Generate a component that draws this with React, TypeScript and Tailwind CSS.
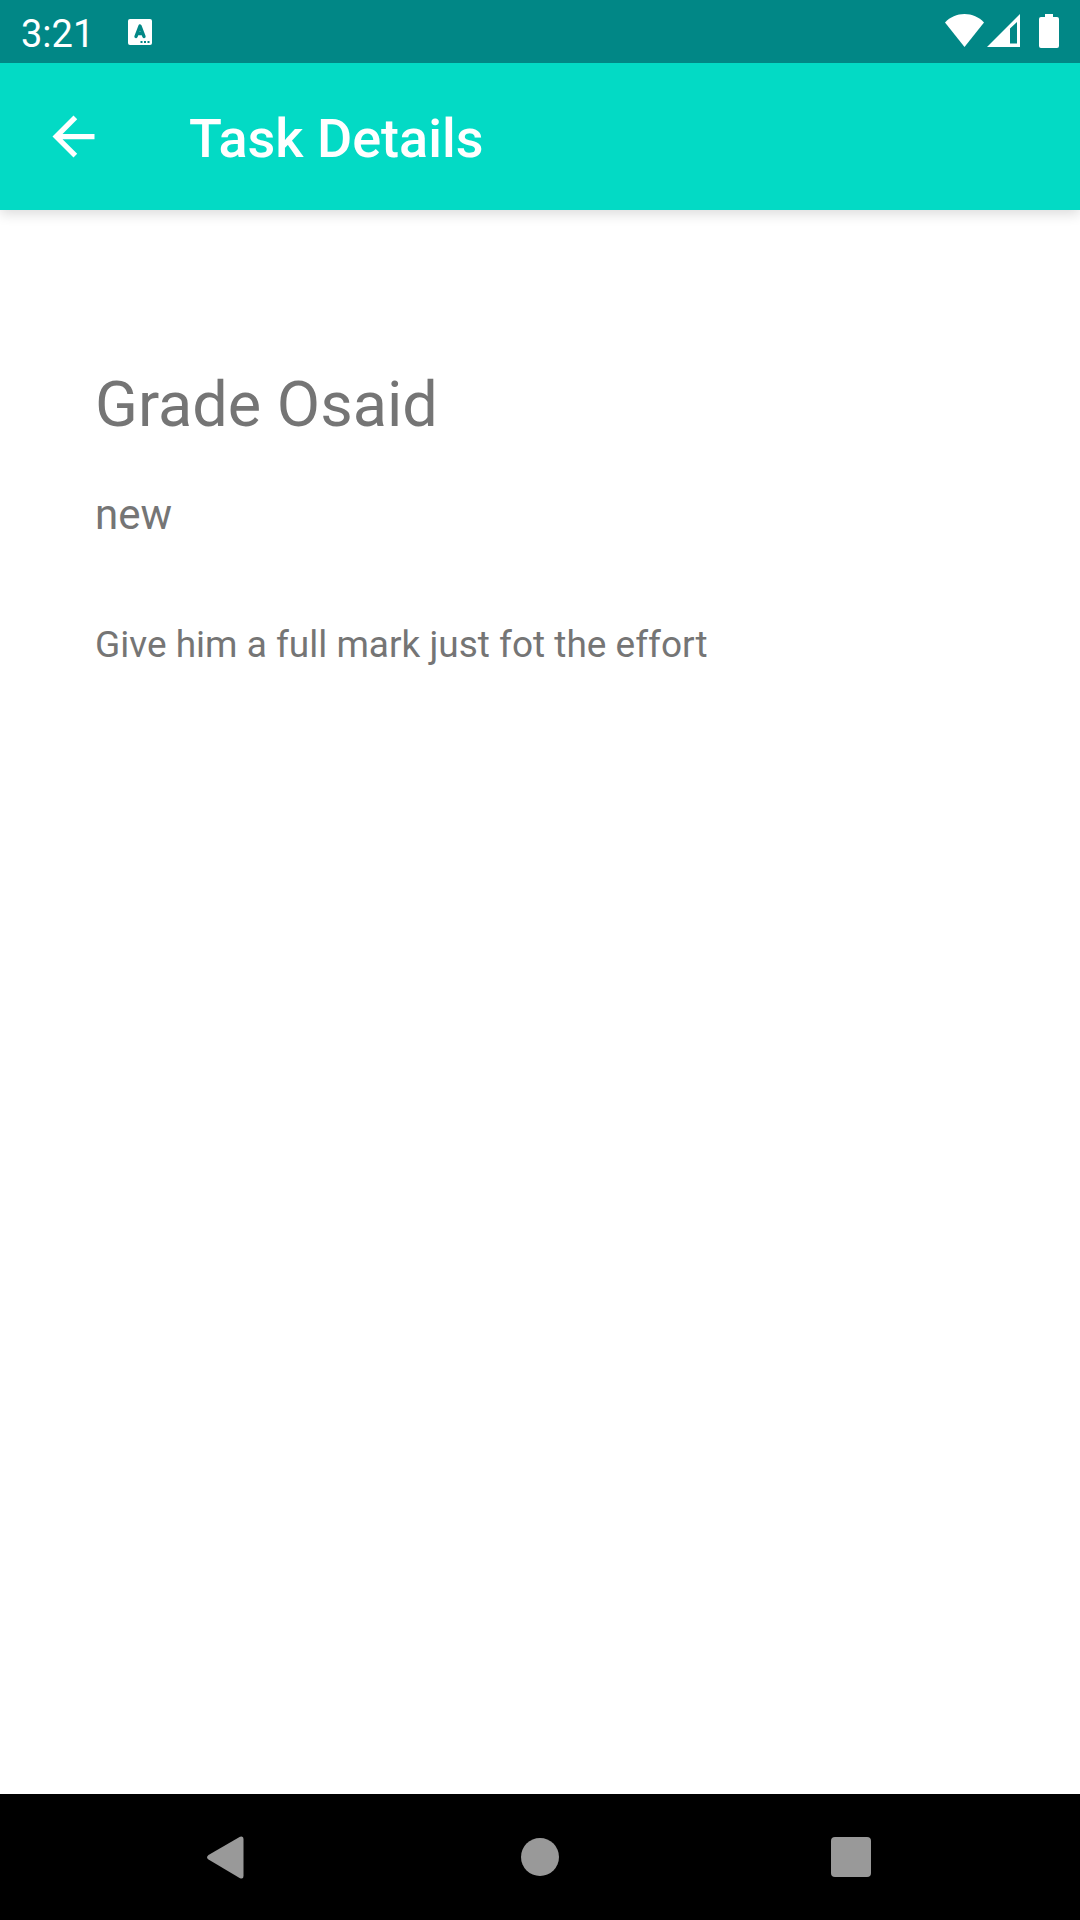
import React from 'react';

function StatusBar() {
  return (
    <div className="relative z-10 flex h-[63px] items-center justify-between bg-[#018786] px-[21px] text-white">
      <div className="flex items-center gap-[34px]">
        <time className="pt-1 text-[38px] leading-[44px]">3:21</time>
        <svg className="h-[28px] w-6" viewBox="0 0 24 28" aria-label="Keyboard input" role="img">
          <rect y="1" width="24" height="26" rx="2" fill="#fff" />
          <path d="M8 18.500L12 8L16 18.500M9.500 15.500H14.500" fill="none" stroke="#018786" strokeWidth="3.400" strokeLinecap="round" strokeLinejoin="round" />
          <path d="M12.500 23h2v2h-2zM16 23h2v2h-2zM19.500 23h2v2h-2z" fill="#018786" />
        </svg>
      </div>
      <div className="flex items-center pb-0.5">
        <svg className="h-[34px] w-[39px]" viewBox="0 0 39 34" fill="#fff" aria-label="Wi-Fi" role="img">
          <path d="M0 8.500C5 3 12 0 19.500 0S34 3 39 8.500L19.500 33Z" />
        </svg>
        <svg className="ml-[3px] h-[34px] w-[33px]" viewBox="0 0 33 34" fill="#fff" aria-label="Mobile signal" role="img">
          <path fillRule="evenodd" d="M33 0V33H0ZM30 8L23 14.500V29.500H30Z" />
        </svg>
        <svg className="ml-[19px] h-[34px] w-5" viewBox="0 0 20 34" fill="#fff" aria-label="Battery full" role="img">
          <path d="M6 0H14V3H18Q20 3 20 5V32Q20 34 18 34H2Q0 34 0 32V5Q0 3 2 3H6Z" />
        </svg>
      </div>
    </div>
  );
}

function AppBar() {
  return (
    <header className="relative flex h-[147px] items-center bg-[#03dac5] text-white shadow-[0_4px_12px_rgba(0,0,0,0.14)]">
      <button type="button" aria-label="Navigate up" className="flex h-full w-[147px] items-center justify-center">
        <svg className="h-[63px] w-[63px]" viewBox="0 0 24 24" fill="currentColor">
          <path d="M20 11H7.830l5.590-5.590L12 4l-8 8 8 8 1.410-1.410L7.830 13H20v-2z" />
        </svg>
      </button>
      <h1 className="pl-[42px] pt-1 text-[54px] font-medium leading-[62px]">Task Details</h1>
    </header>
  );
}

function NavigationBar() {
  return (
    <nav className="grid h-[126px] grid-cols-3 bg-black px-[73px] text-[#999]">
      <button type="button" aria-label="Back" className="flex items-center justify-center">
        <svg className="h-[63px] w-[63px]" viewBox="0 0 63 63" fill="currentColor">
          <path d="M11.500 29L43 10.800Q46.500 9.500 46.500 13V50Q46.500 53.500 43 52.200L11.500 33.500Q8.500 31.300 11.500 29Z" />
        </svg>
      </button>
      <button type="button" aria-label="Home" className="flex items-center justify-center">
        <span className="size-[38px] rounded-full bg-current" />
      </button>
      <button type="button" aria-label="Overview" className="flex items-center justify-center">
        <span className="size-10 rounded bg-current" />
      </button>
    </nav>
  );
}

export default function App() {
  return (
    <div className="flex min-h-screen flex-col bg-white font-['Roboto',sans-serif]">
      <StatusBar />
      <AppBar />
      <main className="flex-1 px-[95px] pt-[158px] text-[#757575]">
        <h2 className="text-[63px] leading-[74px]">Grade Osaid</h2>
        <p className="mt-12 text-[42px] leading-[50px]">new</p>
        <p className="mt-[83px] text-[37px] leading-[44px]">Give him a full mark just fot the effort</p>
      </main>
      <NavigationBar />
    </div>
  );
}
